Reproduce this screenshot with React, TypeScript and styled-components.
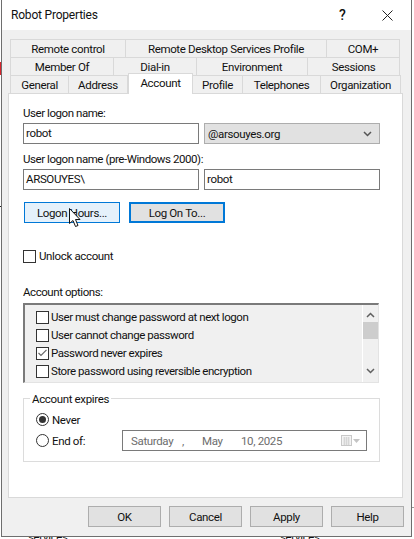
import React from "react";
import styled, { createGlobalStyle } from "styled-components";

const Global = createGlobalStyle`
  html, body { margin: 0; padding: 0; background: #fff; }
  * { box-sizing: border-box; }
  body { font-family: Roboto, "Liberation Sans", sans-serif; font-size: 11.5px; letter-spacing: -0.35px; color: #111; }
`;

const Page = styled.div`
  position: relative;
  width: 414px;
  height: 539px;
  overflow: hidden;
  background:
    linear-gradient(#d8242c, #d8242c) 0 62px / 1px 13px no-repeat,
    linear-gradient(#222, #222) 0 206px / 1px 1px no-repeat,
    linear-gradient(#999, #999) 412px 507px / 2px 1px no-repeat,
    #fff;
`;

const Dialog = styled.div`
  margin-left: 1px;
  width: 411px;
  height: 537px;
  border: 1px solid #6e6e6e;
  border-top: 0;
  background: #f0f0f0;
  display: flex;
  flex-direction: column;
`;

const TitleBar = styled.div`
  height: 30px;
  flex: none;
  background: #fff;
  display: flex;
  align-items: center;
  padding: 0 18px 0 9px;
`;

const Title = styled.div`
  font-size: 12px;
  letter-spacing: -0.2px;
  flex: 1;
`;

const HelpGlyph = styled.div`
  font-size: 14px;
  font-weight: 500;
  width: 10px;
  margin-right: 33px;
`;

const CloseIcon = () => (
  <svg width="11" height="11" viewBox="0 0 11 11">
    <path d="M0.5 0.5 L10.5 10.5 M10.5 0.5 L0.5 10.5" stroke="#222" strokeWidth="1" fill="none" />
  </svg>
);

const Body = styled.div`
  flex: 1;
  display: flex;
  flex-direction: column;
  padding: 9px 7px 0 6px;
`;

const TabRows = styled.div`
  display: flex;
  flex-direction: column;
  padding-left: 2px;
`;

const TabRow = styled.div`
  display: flex;
  height: 18px;
`;

const Tab = styled.div<{ $w: number }>`
  width: ${(p) => p.$w}px;
  height: 18px;
  border: 1px solid #d9d9d9;
  border-left-width: 0;
  border-bottom-width: 0;
  display: flex;
  align-items: center;
  justify-content: center;
  &:first-child { border-left-width: 1px; }
`;

const ActiveTab = styled.div<{ $w: number }>`
  width: ${(p) => p.$w}px;
  height: 21px;
  margin-top: -2px;
  padding-bottom: 3px;
  background: #fff;
  border: 1px solid #d9d9d9;
  border-bottom: 0;
  display: flex;
  align-items: center;
  justify-content: center;
  z-index: 1;
`;

const Panel = styled.div`
  width: 395px;
  height: 405px;
  flex: none;
  background: #fff;
  border: 1px solid #d9d9d9;
  padding: 11px 21px 0 14px;
  display: flex;
  flex-direction: column;
`;

const FieldLabel = styled.div`
  height: 16px;
  line-height: 16px;
  letter-spacing: -0.44px;
`;

const SecondLabel = styled(FieldLabel)`
  margin-top: 7px;
`;

const FieldRow = styled.div`
  display: flex;
  gap: 5px;
  margin-top: 2px;
`;

const TextField = styled.div`
  width: 176px;
  height: 21px;
  border: 1px solid #7a7a7a;
  padding-left: 2px;
  line-height: 18px;
`;

const ComboField = styled.div`
  width: 176px;
  height: 21px;
  background: #e1e1e1;
  border: 1px solid #adadad;
  padding: 0 7px 0 3px;
  display: flex;
  align-items: center;
  justify-content: space-between;
`;

const Chevron = ({ up, color = "#555", width = 9 }: { up?: boolean; color?: string; width?: number }) => (
  <svg width={width} height="6" viewBox="0 0 9 6">
    <path d={up ? "M1 5 L4.5 1.5 L8 5" : "M1 1 L4.5 4.5 L8 1"} stroke={color} strokeWidth="1.5" fill="none" />
  </svg>
);

const ButtonRow = styled.div`
  display: flex;
  gap: 9px;
  margin: 12px 0 0 1px;
`;

const ActionButton = styled.div<{ $state: "hover" | "focus" }>`
  width: 96px;
  height: 21px;
  display: flex;
  align-items: center;
  justify-content: center;
  background: ${(p) => (p.$state === "hover" ? "#e5f1fb" : "#e1e1e1")};
  border: ${(p) => (p.$state === "hover" ? 1 : 2)}px solid #0078d7;
`;

const Check = styled.div`
  width: 13px;
  height: 13px;
  flex: none;
  background: #fff;
  border: 1px solid #333;
  display: flex;
  align-items: center;
  justify-content: center;
`;

const CheckRow = styled.div`
  display: flex;
  align-items: center;
  gap: 3px;
  height: 18px;
`;

const OptionRow = styled(CheckRow)`
  gap: 2px;
  letter-spacing: -0.45px;
`;

const UnlockRow = styled(CheckRow)`
  margin-top: 24px;
`;

const OptionsLabel = styled(FieldLabel)`
  margin-top: 19px;
`;

const ListBox = styled.div`
  width: 356px;
  height: 80px;
  margin-top: 3px;
  flex: none;
  display: flex;
  background: #f0f0f0;
  border-top: 2px solid #7a7a7a;
  border-left: 2px solid #7a7a7a;
  border-right: 1px solid #e3e3e3;
  border-bottom: 1px solid #e3e3e3;
`;

const ListItems = styled.div`
  flex: 1;
  padding: 3px 0 0 11px;
`;

const ScrollBar = styled.div`
  width: 16px;
  border-left: 1px solid #fff;
  display: flex;
  flex-direction: column;
  align-items: center;
  padding-top: 7px;
`;

const ScrollThumb = styled.div`
  width: 15px;
  height: 17px;
  background: #cdcdcd;
  margin-top: 4px;
`;

const ScrollSpacer = styled.div`
  height: 29px;
  flex: none;
`;

const GroupBox = styled.div`
  position: relative;
  width: 357px;
  height: 64px;
  margin-top: 15px;
  flex: none;
  border: 1px solid #dcdcdc;
  padding: 10px 12px 0 12px;
`;

const Legend = styled.div`
  position: absolute;
  left: 6px;
  top: -8px;
  padding: 0 2px;
  background: #fff;
  line-height: 16px;
`;

const RadioRow = styled.div`
  display: flex;
  align-items: center;
  gap: 3px;
  height: 21px;
`;

const Radio = styled.div<{ $on?: boolean }>`
  width: 13px;
  height: 13px;
  flex: none;
  border-radius: 50%;
  border: 1px solid #333;
  display: flex;
  align-items: center;
  justify-content: center;
  &::after {
    content: "";
    width: 7px;
    height: 7px;
    border-radius: 50%;
    background: ${(p) => (p.$on ? "#333" : "transparent")};
  }
`;

const RadioLabel = styled.div`
  width: 67px;
`;

const DateField = styled.div`
  width: 245px;
  height: 21px;
  border: 1px solid #7a7a7a;
  color: #6d6d6d;
  display: flex;
  align-items: center;
  padding: 0 6px 0 8px;
`;

const DatePart = styled.span<{ $w: number }>`
  width: ${(p) => p.$w}px;
  flex: none;
`;

const DateIcon = styled.div`
  margin-left: auto;
  display: flex;
  align-items: center;
`;

const Footer = styled.div`
  display: flex;
  justify-content: flex-end;
  gap: 8px;
  margin-top: 8px;
`;

const FooterButton = styled.div`
  width: 73px;
  height: 21px;
  background: #e1e1e1;
  border: 1px solid #adadad;
  display: flex;
  align-items: center;
  justify-content: center;
`;

const BackStrip = styled.div`
  height: 2px;
  overflow: hidden;
  display: flex;
  margin-left: 28px;
`;

const BackText = styled.div<{ $w: number }>`
  width: ${(p) => p.$w}px;
  flex: none;
  line-height: 12px;
  margin-top: -6px;
`;

const Cursor = styled.svg`
  position: absolute;
  left: 69px;
  top: 208px;
`;

const rows = [
  [["Remote control", 116], ["Remote Desktop Services Profile", 201], ["COM+", 73]],
  [["Member Of", 104], ["Dial-in", 83], ["Environment", 111], ["Sessions", 92]],
] as [string, number][][];

const options = [
  ["User must change password at next logon", false],
  ["User cannot change password", false],
  ["Password never expires", true],
  ["Store password using reversible encryption", false],
] as [string, boolean][];

export default function App() {
  return (
    <Page>
      <Global />
      <Dialog>
        <TitleBar>
          <Title>Robot Properties</Title>
          <HelpGlyph>?</HelpGlyph>
          <CloseIcon />
        </TitleBar>
        <Body>
          <TabRows>
            {rows.map((r, i) => (
              <TabRow key={i}>
                {r.map(([t, w]) => (
                  <Tab key={t} $w={w}>{t}</Tab>
                ))}
              </TabRow>
            ))}
            <TabRow>
              <Tab $w={59}>General</Tab>
              <Tab $w={59}>Address</Tab>
              <ActiveTab $w={65}>Account</ActiveTab>
              <Tab $w={50}>Profile</Tab>
              <Tab $w={78}>Telephones</Tab>
              <Tab $w={80}>Organization</Tab>
            </TabRow>
          </TabRows>
          <Panel>
            <FieldLabel>User logon name:</FieldLabel>
            <FieldRow>
              <TextField>robot</TextField>
              <ComboField>
                @arsouyes.org
                <Chevron />
              </ComboField>
            </FieldRow>
            <SecondLabel>User logon name (pre-Windows 2000):</SecondLabel>
            <FieldRow>
              <TextField>ARSOUYES\</TextField>
              <TextField>robot</TextField>
            </FieldRow>
            <ButtonRow>
              <ActionButton $state="hover">Logon Hours...</ActionButton>
              <ActionButton $state="focus">Log On To...</ActionButton>
            </ButtonRow>
            <UnlockRow>
              <Check />
              Unlock account
            </UnlockRow>
            <OptionsLabel>Account options:</OptionsLabel>
            <ListBox>
              <ListItems>
                {options.map(([t, on]) => (
                  <OptionRow key={t}>
                    <Check>
                      {on && (
                        <svg width="9" height="8" viewBox="0 0 9 8">
                          <path d="M0.5 4 L3 6.5 L8.5 0.8" stroke="#666" strokeWidth="1.2" fill="none" />
                        </svg>
                      )}
                    </Check>
                    {t}
                  </OptionRow>
                ))}
              </ListItems>
              <ScrollBar>
                <Chevron up color="#606060" />
                <ScrollThumb />
                <ScrollSpacer />
                <Chevron color="#606060" />
              </ScrollBar>
            </ListBox>
            <GroupBox>
              <Legend>Account expires</Legend>
              <RadioRow>
                <Radio $on />
                <RadioLabel>Never</RadioLabel>
              </RadioRow>
              <RadioRow>
                <Radio />
                <RadioLabel>End of:</RadioLabel>
                <DateField>
                  <DatePart $w={51}>Saturday</DatePart>
                  <DatePart $w={20}>,</DatePart>
                  <DatePart $w={39}>May</DatePart>
                  <span>10, 2025</span>
                  <DateIcon>
                    <svg width="19" height="12" viewBox="0 0 19 12">
                      <rect x="0.5" y="0.5" width="10" height="10" fill="#f4f4f4" stroke="#c8c8c8" />
                      <path d="M2 3H9M2 5H9M2 7H9M2 9H9M3.5 2V10M5.5 2V10M7.5 2V10" stroke="#cfcfcf" strokeWidth="0.7" />
                      <path d="M12 4H19L15.5 8Z" fill="#c4c4c4" />
                    </svg>
                  </DateIcon>
                </DateField>
              </RadioRow>
            </GroupBox>
          </Panel>
          <Footer>
            <FooterButton>OK</FooterButton>
            <FooterButton>Cancel</FooterButton>
            <FooterButton>Apply</FooterButton>
            <FooterButton>Help</FooterButton>
          </Footer>
        </Body>
      </Dialog>
      <BackStrip>
        <BackText $w={252}>services</BackText>
        <BackText $w={60}>services</BackText>
      </BackStrip>
      <Cursor width="13" height="20" viewBox="0 0 13 20">
        <path d="M0.5 0.5 L0.5 15.5 L4 12.5 L6.5 18.5 L9 17.5 L6.5 11.5 L11 11.5 Z" fill="#fff" stroke="#111" strokeWidth="1" />
      </Cursor>
    </Page>
  );
}
